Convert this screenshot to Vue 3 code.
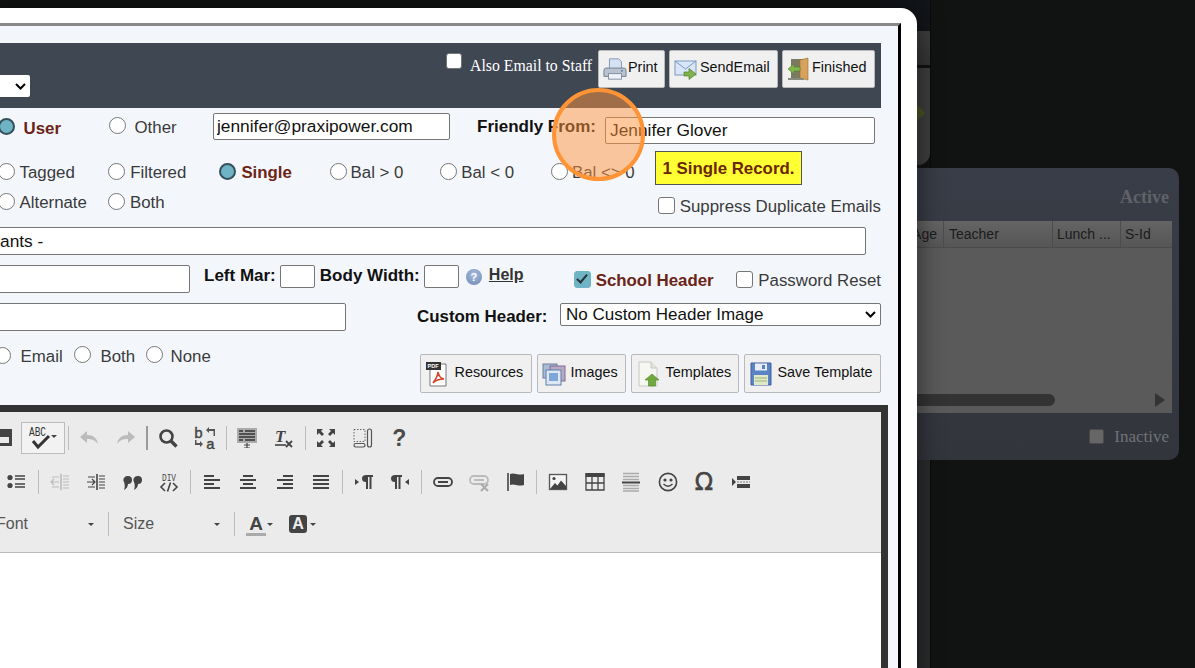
<script setup>
const columns = [
  { label: 'Age', cls: 'col-age' },
  { label: 'Teacher', cls: 'col-teacher' },
  { label: 'Lunch ...', cls: 'col-lunch' },
  { label: 'S-Id', cls: 'col-sid' }
]
</script>

<template>
  <div class="stage">
    <!-- dimmed desktop behind the dialog -->
    <div class="bg-top"></div>
    <div class="bg-bar"></div>
    <div class="bg-pane">
      <svg class="bg-diamond" width="14" height="26" viewBox="0 0 14 26"><path d="M0 0 L13 13 L0 26 Z" fill="#4a5526" /></svg>
    </div>
    <div class="bg-lower"></div>
    <div class="bg-rule"></div>
    <section class="win">
      <div class="win-title">Active</div>
      <div class="win-table">
        <div class="win-head">
          <span v-for="c in columns" :key="c.label" class="win-col" :class="c.cls">{{ c.label }}</span>
        </div>
        <div class="win-scroll">
          <span class="win-thumb"></span>
          <svg width="10" height="14" viewBox="0 0 10 14"><path d="M0 0 L10 7 L0 14 Z" fill="#333" /></svg>
        </div>
      </div>
      <div class="win-foot">
        <span class="win-check"></span>
        <span class="win-inactive">Inactive</span>
      </div>
    </section>

    <!-- dialog -->
    <main class="modal">
      <div class="panel">
        <header class="bar">
          <span class="sel-wrap w-bar">
            <select class="bar-select"><option></option></select>
            <svg class="chev" width="11" height="7" viewBox="0 0 11 7"><path d="M1 1 L5.5 5.5 L10 1" fill="none" stroke="#000" stroke-width="2" /></svg>
          </span>
          <label class="staff"><input type="checkbox" class="cb" /><span>Also Email to Staff</span></label>
          <button class="btn b-print">
            <svg width="24" height="24" viewBox="0 0 26 26">
              <path d="M7 2 H17 L20 5 V13 H7 Z" fill="#d6e2f3" stroke="#7f93b5" />
              <path d="M3 12 H23 Q25 12 25 15 V21 H1 V15 Q1 12 3 12 Z" fill="#b9c2cf" stroke="#6f7d92" />
              <rect x="6" y="18" width="14" height="6" fill="#eef2f8" stroke="#7f8ca3" />
              <circle cx="20.5" cy="15" r="1" fill="#4b6e9d" />
            </svg>
            <span>Print</span>
          </button>
          <button class="btn b-mail">
            <svg width="24" height="24" viewBox="0 0 24 24">
              <rect x="1" y="4" width="21" height="14" fill="#d8e6f7" stroke="#7c97bd" />
              <path d="M1 4 L11.5 12 L22 4" fill="none" stroke="#7c97bd" />
              <path d="M10 15 H15 V11.5 L22 17 L15 22.5 V19 H10 Z" fill="#7fb24a" stroke="#55802c" stroke-width=".7" />
            </svg>
            <span>SendEmail</span>
          </button>
          <button class="btn b-door">
            <svg width="23" height="24" viewBox="0 0 23 24">
              <rect x="4" y="2" width="13" height="20" fill="#7a7a60" />
              <path d="M13 3 L21 1 V23 L13 21 Z" fill="#d8a25c" stroke="#9c6d2f" stroke-width=".6" />
              <path d="M1 12 L7 7 V10 H13 V14 H7 V17 Z" fill="#80b64c" stroke="#55802c" stroke-width=".6" />
              <rect x="1" y="21" width="16" height="2" fill="#8a8a7a" />
            </svg>
            <span>Finished</span>
          </button>
        </header>

        <div class="row r1">
          <label class="opt o-user"><input type="radio" name="a" class="rd" checked /><span class="hot">User</span></label>
          <label class="opt o-other"><input type="radio" name="a" class="rd" /><span>Other</span></label>
          <input class="field f-mail" value="jennifer@praxipower.com" />
          <span class="strong l-friendly">Friendly From:</span>
          <input class="field f-friendly" value="Jennifer Glover" />
        </div>

        <div class="row r2">
          <label class="opt o-col"><input type="radio" name="b" class="rd" /><span>Tagged</span></label>
          <label class="opt o-col"><input type="radio" name="b" class="rd" /><span>Filtered</span></label>
          <label class="opt o-col o-single"><input type="radio" name="b" class="rd" checked /><span class="hot">Single</span></label>
          <label class="opt o-col o-bal"><input type="radio" name="b" class="rd" /><span>Bal &gt; 0</span></label>
          <label class="opt o-col o-bal"><input type="radio" name="b" class="rd" /><span>Bal &lt; 0</span></label>
          <label class="opt o-last"><input type="radio" name="b" class="rd" /><span>Bal &lt;&gt; 0</span></label>
          <div class="notice">1 Single Record.</div>
        </div>

        <div class="row r3">
          <label class="opt o-col"><input type="radio" name="c" class="rd" /><span>Alternate</span></label>
          <label class="opt o-both"><input type="radio" name="c" class="rd" /><span>Both</span></label>
          <label class="opt o-suppress"><input type="checkbox" class="cb" /><span>Suppress Duplicate Emails</span></label>
        </div>

        <div class="row r4">
          <input class="field f-subject" value="ants -" />
        </div>

        <div class="row r5">
          <input class="field f-a" />
          <span class="strong l-left">Left Mar:</span>
          <input class="field f-small" />
          <span class="strong l-body">Body Width:</span>
          <input class="field f-small" />
          <span class="help-ico">?</span>
          <a class="help">Help</a>
          <label class="opt o-school"><input type="checkbox" class="cb" checked /><span class="hot">School Header</span></label>
          <label class="opt o-pass"><input type="checkbox" class="cb" /><span>Password Reset</span></label>
        </div>

        <div class="row r6">
          <input class="field f-b" />
          <span class="strong l-custom">Custom Header:</span>
          <span class="sel-wrap w-sel">
            <select class="sel"><option>No Custom Header Image</option></select>
            <svg class="chev" width="11" height="7" viewBox="0 0 11 7"><path d="M1 1 L5.5 5.5 L10 1" fill="none" stroke="#000" stroke-width="2" /></svg>
          </span>
        </div>

        <div class="row r7">
          <label class="opt o-email"><input type="radio" name="d" class="rd" /><span>Email</span></label>
          <label class="opt o-b2"><input type="radio" name="d" class="rd" /><span>Both</span></label>
          <label class="opt o-none"><input type="radio" name="d" class="rd" /><span>None</span></label>
          <button class="btn b2 b-res">
            <svg width="24" height="26" viewBox="0 0 24 26">
              <path d="M5 3 H21 V25 H5 Z" fill="#fff" stroke="#777" />
              <rect x="1" y="1" width="15" height="8" fill="#333" />
              <text x="2.5" y="7.4" class="pdf-t">PDF</text>
              <path d="M8 22 C11 18 13 15 13 11 C14 15 15 17 19 18 C15 18 11 19 8 22 Z" fill="none" stroke="#d8432c" stroke-width="1.6" />
            </svg>
            <span>Resources</span>
          </button>
          <button class="btn b2 b-img">
            <svg width="24" height="24" viewBox="0 0 24 24">
              <rect x="1" y="2" width="14" height="14" fill="#a9bdd4" stroke="#6d7f99" />
              <rect x="8" y="4" width="15" height="15" fill="#b8a9c4" stroke="#7a6f8d" />
              <rect x="4" y="8" width="15" height="15" fill="#dce8f6" stroke="#5f7ea8" />
              <rect x="7" y="11" width="9" height="8" fill="#7ea6d6" />
            </svg>
            <span>Images</span>
          </button>
          <button class="btn b2 b-tpl">
            <svg width="24" height="26" viewBox="0 0 24 26">
              <path d="M3 1 H15 L21 7 V25 H3 Z" fill="#f7f7f2" stroke="#c8c8c0" />
              <path d="M15 1 V7 H21" fill="#e4e4dc" stroke="#c8c8c0" />
              <path d="M16 13 L23 19 H19.5 V25 H12.5 V19 H9 Z" fill="#6fa93f" stroke="#4f7f28" stroke-width=".6" />
            </svg>
            <span>Templates</span>
          </button>
          <button class="btn b2 b-save">
            <svg width="22" height="24" viewBox="0 0 22 24">
              <path d="M1 1 H21 V23 H1 Z" fill="#5a83c6" stroke="#3f5f9a" />
              <rect x="5" y="1.5" width="12" height="7" fill="#e9eef6" />
              <rect x="12" y="3" width="3" height="4" fill="#5a83c6" />
              <rect x="4" y="13" width="14" height="10" fill="#dfe8c9" />
              <path d="M5 16 H17 M5 19 H17" stroke="#9bb377" />
            </svg>
            <span>Save Template</span>
          </button>
        </div>

        <div class="editor">
          <div class="toolbar">
            <div class="tb tb1">
              <span class="c c-paste">
                <svg width="20" height="20" viewBox="0 0 20 20"><path d="M5 1 H18 V5 H5 Z M2 5 H18 V18 H2 Z" fill="#444" /><rect x="5" y="9" width="10" height="6" fill="#ebebeb" /></svg>
              </span>
              <span class="abc">
                <svg width="30" height="26" viewBox="0 0 30 26">
                  <text x="1" y="11" class="mono-t" textLength="17" lengthAdjust="spacingAndGlyphs">ABC</text>
                  <path d="M5 16 L10 22 L21 11" fill="none" stroke="#333" stroke-width="3" />
                  <path d="M23 10 H29 L26 13 Z" fill="#444" />
                </svg>
              </span>
              <span class="s"></span>
              <span class="c"><svg width="20" height="20" viewBox="0 0 20 20"><path d="M1 9 L8 3 V7 C14 7 18 10 19 16 C16 12 13 11 8 11 V15 Z" fill="#bbb" /></svg></span>
              <span class="c"><svg width="20" height="20" viewBox="0 0 20 20"><path d="M19 9 L12 3 V7 C6 7 2 10 1 16 C4 12 7 11 12 11 V15 Z" fill="#bbb" /></svg></span>
              <span class="s s-dark"></span>
              <span class="c"><svg width="20" height="20" viewBox="0 0 20 20"><circle cx="8.5" cy="8.5" r="6" fill="none" stroke="#444" stroke-width="2.6" /><path d="M13 13 L18.5 18.5" stroke="#444" stroke-width="3.4" /></svg></span>
              <span class="c">
                <svg width="24" height="30" viewBox="0 0 24 30">
                  <text x="1" y="15" class="rep-t">b</text>
                  <text x="13" y="26" class="rep-t">a</text>
                  <path d="M13 7 L16 4 V6 H22 V13 H20.5 V8 H16 V10 Z M2 17 H3.5 V20 H7 V18 L10 21 L7 24 V22 H2 Z" fill="#555" />
                </svg>
              </span>
              <span class="s"></span>
              <span class="c">
                <svg width="20" height="20" viewBox="0 0 20 20">
                  <rect x="0" y="0" width="20" height="15" fill="#aaa" />
                  <path d="M2 3 H6 M8 3 H18 M2 6 H18 M2 9 H18 M2 12 H6 M8 12 H18" stroke="#333" stroke-width="1.6" />
                  <path d="M7 17 H13 M10 15 V20 M7 20 H13" stroke="#444" stroke-width="1.2" />
                </svg>
              </span>
              <span class="c">
                <svg width="20" height="20" viewBox="0 0 20 20">
                  <text x="1" y="14" class="tx-t">T</text>
                  <path d="M1 17 H12" stroke="#444" stroke-width="1.6" />
                  <path d="M12 13 L18 19 M18 13 L12 19" stroke="#444" stroke-width="1.8" />
                </svg>
              </span>
              <span class="s"></span>
              <span class="c">
                <svg width="20" height="20" viewBox="0 0 20 20">
                  <path d="M1 1 H7 L5 3 L8 6 L6 8 L3 5 L1 7 Z M19 1 V7 L17 5 L14 8 L12 6 L15 3 L13 1 Z M1 19 V13 L3 15 L6 12 L8 14 L5 17 L7 19 Z M19 19 H13 L15 17 L12 14 L14 12 L17 15 L19 13 Z" fill="#444" />
                </svg>
              </span>
              <span class="c">
                <svg width="20" height="20" viewBox="0 0 20 20">
                  <rect x="1" y="1.5" width="11" height="12" fill="none" stroke="#666" stroke-dasharray="1.5 1.5" />
                  <rect x="14.5" y="1" width="4" height="18" rx="2" fill="none" stroke="#555" stroke-width="1.2" />
                  <rect x="1" y="15.5" width="11" height="3.5" rx="1.7" fill="none" stroke="#555" stroke-width="1.2" />
                </svg>
              </span>
              <span class="c q">?</span>
            </div>

            <div class="tb tb2">
              <span class="c">
                <svg width="20" height="20" viewBox="0 0 20 20">
                  <circle cx="3" cy="5.5" r="2.6" fill="#444" /><circle cx="3" cy="13.5" r="2.6" fill="#444" />
                  <path d="M8 4 H18 M8 7 H18 M8 12 H18 M8 15 H18" stroke="#444" stroke-width="1.4" />
                </svg>
              </span>
              <span class="s"></span>
              <span class="c">
                <svg width="20" height="20" viewBox="0 0 20 20">
                  <path d="M11 2 V18" stroke="#bbb" stroke-width="1.6" />
                  <path d="M13 4 H19 M13 7 H19 M13 10 H19 M13 13 H19 M13 16 H19 M1 10 H9 M4 7 L1 10 L4 13 M2 5 H9 M2 15 H9" stroke="#bbb" stroke-width="1.2" fill="none" />
                </svg>
              </span>
              <span class="c">
                <svg width="20" height="20" viewBox="0 0 20 20">
                  <path d="M11 2 V18" stroke="#444" stroke-width="1.6" />
                  <path d="M13 4 H19 M13 7 H19 M13 10 H19 M13 13 H19 M13 16 H19 M1 10 H9 M6 7 L9 10 L6 13 M2 5 H9 M2 15 H9" stroke="#444" stroke-width="1.2" fill="none" />
                </svg>
              </span>
              <span class="c">
                <svg width="20" height="20" viewBox="0 0 20 20">
                  <path d="M5 4 A4 4 0 0 1 5 12 C5 15 3 17 1 18 C2 15 2 13 1 10 A4 4 0 0 1 5 4 Z M15 4 A4 4 0 0 1 15 12 C15 15 13 17 11 18 C12 15 12 13 11 10 A4 4 0 0 1 15 4 Z" fill="#444" />
                </svg>
              </span>
              <span class="c">
                <svg width="20" height="22" viewBox="0 0 20 22">
                  <text x="3" y="10" class="div-t" textLength="14" lengthAdjust="spacingAndGlyphs">DIV</text>
                  <path d="M6 12 L2 16 L6 20 M14 12 L18 16 L14 20 M11.5 11.5 L8.5 20.5" fill="none" stroke="#444" stroke-width="1.6" />
                </svg>
              </span>
              <span class="s"></span>
              <span class="c"><svg width="20" height="20" viewBox="0 0 20 20"><path d="M2 4 H12 M2 8 H18 M2 12 H12 M2 16 H18" stroke="#444" stroke-width="2.2" /></svg></span>
              <span class="c"><svg width="20" height="20" viewBox="0 0 20 20"><path d="M5 4 H15 M2 8 H18 M5 12 H15 M2 16 H18" stroke="#444" stroke-width="2.2" /></svg></span>
              <span class="c"><svg width="20" height="20" viewBox="0 0 20 20"><path d="M8 4 H18 M2 8 H18 M8 12 H18 M2 16 H18" stroke="#444" stroke-width="2.2" /></svg></span>
              <span class="c"><svg width="20" height="20" viewBox="0 0 20 20"><path d="M2 4 H18 M2 8 H18 M2 12 H18 M2 16 H18" stroke="#444" stroke-width="2.2" /></svg></span>
              <span class="s"></span>
              <span class="c">
                <svg width="20" height="20" viewBox="0 0 20 20">
                  <path d="M1 7 L5 10 L1 13 Z" fill="#444" />
                  <path d="M12 3 H19 V5 H17.5 V17 H15.5 V5 H14 V17 H12 V10 A4 3.5 0 0 1 12 3 Z" fill="#444" />
                </svg>
              </span>
              <span class="c">
                <svg width="20" height="20" viewBox="0 0 20 20">
                  <path d="M19 7 L15 10 L19 13 Z" fill="#444" />
                  <path d="M5 3 H12 V5 H10.5 V17 H8.5 V5 H7 V17 H5 V10 A4 3.5 0 0 1 5 3 Z" fill="#444" />
                </svg>
              </span>
              <span class="s"></span>
              <span class="c">
                <svg width="20" height="20" viewBox="0 0 20 20">
                  <rect x="1" y="6" width="18" height="8" rx="4" fill="none" stroke="#444" stroke-width="1.8" />
                  <path d="M5 10 H15" stroke="#444" stroke-width="2" />
                </svg>
              </span>
              <span class="c">
                <svg width="20" height="20" viewBox="0 0 20 20">
                  <rect x="1" y="4" width="18" height="8" rx="4" fill="none" stroke="#bbb" stroke-width="1.8" />
                  <path d="M5 8 H15" stroke="#bbb" stroke-width="2" />
                  <path d="M12 12 L19 19 M19 12 L12 19" stroke="#aaa" stroke-width="2" />
                </svg>
              </span>
              <span class="c">
                <svg width="20" height="20" viewBox="0 0 20 20">
                  <path d="M2 1 V19" stroke="#444" stroke-width="1.6" />
                  <path d="M4 2 C8 0 12 4 18 2 V13 C12 15 8 11 4 13 Z" fill="#444" />
                </svg>
              </span>
              <span class="s"></span>
              <span class="c">
                <svg width="20" height="20" viewBox="0 0 20 20">
                  <rect x="1.5" y="2.5" width="17" height="15" fill="#f4f4f4" stroke="#555" stroke-width="1.3" />
                  <circle cx="6" cy="6.5" r="1.6" fill="#444" />
                  <path d="M2 17 L7 11 L9.5 13.5 L13 8.5 L18 14 V17 Z" fill="#444" />
                </svg>
              </span>
              <span class="c">
                <svg width="20" height="20" viewBox="0 0 20 20">
                  <rect x="0.5" y="1" width="19" height="4" fill="#444" />
                  <path d="M1 2 H19 V18 H1 Z M7 5 V18 M13 5 V18 M1 11 H19" fill="none" stroke="#444" stroke-width="1.3" />
                </svg>
              </span>
              <span class="c">
                <svg width="20" height="20" viewBox="0 0 20 20">
                  <path d="M2 1.5 H18 M2 4.5 H18 M2 7.5 H18 M2 13.5 H18 M2 16.5 H18 M2 19 H18" stroke="#aaa" stroke-width="1.4" />
                  <path d="M1 10.5 H19" stroke="#444" stroke-width="2" />
                </svg>
              </span>
              <span class="c">
                <svg width="20" height="20" viewBox="0 0 20 20">
                  <circle cx="10" cy="10" r="8.6" fill="none" stroke="#444" stroke-width="1.6" />
                  <circle cx="7" cy="8" r="1.6" fill="#444" /><circle cx="13" cy="8" r="1.6" fill="#444" />
                  <path d="M5.5 12 Q10 16.5 14.5 12" fill="none" stroke="#444" stroke-width="1.4" />
                </svg>
              </span>
              <span class="c omega">Ω</span>
              <span class="c">
                <svg width="20" height="20" viewBox="0 0 20 20">
                  <path d="M1 6 L5 10 L1 14 Z" fill="#444" />
                  <rect x="6" y="4" width="13" height="4" fill="#444" />
                  <rect x="6" y="12" width="13" height="4" fill="#444" />
                  <path d="M6 10 H19" stroke="#777" stroke-dasharray="2 1" />
                </svg>
              </span>
            </div>

            <div class="tb tb3">
              <span class="combo c-font"><span>Font</span><i class="caret"></i></span>
              <span class="s"></span>
              <span class="combo c-size"><span>Size</span><i class="caret"></i></span>
              <span class="s"></span>
              <span class="txt-a"><b>A</b><i class="caret"></i></span>
              <span class="bg-a"><b>A</b><i class="caret"></i></span>
            </div>
          </div>
          <div class="canvas"></div>
        </div>
      </div>
    </main>

    <div class="spot"></div>
  </div>
</template>

<style>
html, body { margin: 0; background: #111312; }
</style>

<style scoped>
.stage {
  position: relative;
  width: 1195px;
  height: 668px;
  overflow: hidden;
  background: #111312;
  font-family: "Liberation Sans", Arial, sans-serif;
}

/* backdrop */
.bg-top { position: absolute; left: 880px; top: 0; width: 50px; height: 30px; background: #12151a; }
.bg-bar { position: absolute; left: 880px; top: 31px; width: 50px; height: 34px; background: linear-gradient(#3f3f3f, #343434); }
.bg-pane {
  position: absolute; left: 880px; top: 68px; width: 50px; height: 97px;
  background: #3e3e3e; border-bottom-right-radius: 12px;
}
.bg-diamond { position: absolute; left: 32px; top: 32px; }
.bg-lower { position: absolute; left: 880px; top: 460px; width: 50px; height: 208px; background: #2a2b2c; }
.bg-rule { position: absolute; left: 930px; top: 0; width: 1px; height: 668px; background: #0b0b0b; }
.win {
  position: absolute; left: 800px; top: 168px; width: 379px; height: 292px;
  box-sizing: border-box; border-radius: 10px;
  background: linear-gradient(#393d47, #32353c);
  display: flex; flex-direction: column; align-items: flex-end;
}
.win-title {
  height: 53px; padding-right: 10px;
  font: bold 18px/58px "Liberation Serif", serif; color: #5f6269;
}
.win-table {
  width: 372px; height: 192px; margin-right: 7px; box-sizing: border-box;
  background: #5a5a5a; display: flex; flex-direction: column; justify-content: space-between;
}
.win-head {
  height: 27px; display: flex; justify-content: flex-end; padding-right: 1px;
  background: linear-gradient(#646464, #565656); border-bottom: 1px solid #4b4b4b; box-sizing: border-box;
}
.win-col {
  font-size: 14px; line-height: 26px; color: #1c1c1c; box-sizing: border-box;
  border-right: 1px solid #4c4c4c; white-space: nowrap;
}
.col-age { width: 40px; text-align: right; padding-right: 6px; }
.col-teacher { width: 109px; padding-left: 5px; }
.col-lunch { width: 68px; padding-left: 4px; }
.col-sid { width: 50px; padding-left: 4px; border-right: 0; }
.win-scroll {
  height: 17px; display: flex; align-items: center; justify-content: space-between;
  padding-right: 7px; margin-bottom: 5px;
}
.win-thumb { width: 255px; height: 12px; border-radius: 6px; background: #333; }
.win-foot { flex: 1; display: flex; align-items: center; padding-right: 10px; gap: 10px; }
.win-check {
  width: 15px; height: 15px; box-sizing: border-box; border-radius: 2px;
  background: #666; border: 1px solid #4a4a4a;
}
.win-inactive { font: 17px "Liberation Serif", serif; color: #6f7276; }

/* dialog */
.modal {
  position: absolute; left: -10px; top: 8px; width: 927px; height: 680px;
  box-sizing: border-box; padding: 15px 16px 0 0;
  background: #fff; border-radius: 0 16px 0 0;
  box-shadow: 0 0 26px rgba(0, 0, 0, .55);
}
.panel {
  height: 100%; box-sizing: border-box; padding: 17px 17px 0 0;
  background: #f3f7fc; border-top: 3px solid #888; border-right: 3px solid #000;
}
.bar {
  height: 65px; background: #3f4753; display: flex; align-items: flex-start;
  position: relative;
}
.sel-wrap { position: relative; display: block; flex: none; }
.chev { position: absolute; pointer-events: none; }
.w-bar { width: 40px; height: 22px; margin-top: 32px; }
.w-bar .chev { left: 25px; top: 8px; }
.bar-select {
  appearance: none; -webkit-appearance: none; display: block;
  width: 40px; height: 22px; border: 0; border-radius: 2px; background: #fff;
  font: 15px "Liberation Sans", sans-serif; color: #000;
}
.staff {
  display: flex; align-items: flex-start; gap: 8px; margin: 10px 0 0 416px; width: 152px;
  font: 15.8px/24px "Liberation Serif", serif; color: #fff; white-space: nowrap;
}
.staff span { position: relative; top: 1px; }
.staff .cb { margin-top: 0; width: 16px; height: 16px; }
.btn {
  display: flex; align-items: center; box-sizing: border-box; height: 38px; padding: 0 0 0 4px;
  background: #f0f0f0; border: 1px solid #b9b9b9; border-radius: 2px;
  font: 14.4px "Liberation Sans", sans-serif; color: #111; white-space: nowrap;
}
.btn svg { flex: none; }
.btn span { position: relative; top: -2px; }
.b-print { width: 67px; margin: 7px 0 0 0; gap: 1px; }
.b-mail { width: 109px; margin: 7px 0 0 4px; gap: 2px; }
.b-door { width: 93px; margin: 7px 0 0 4px; gap: 2px; }

.row { display: flex; align-items: flex-start; position: relative; }
.r1 { height: 43px; padding-left: 7.5px; }
.r2 { height: 36px; padding-left: 7.5px; }
.r3 { height: 38px; padding-left: 7.5px; }
.r4 { height: 36px; }
.r5 { height: 38px; }
.r6 { height: 45px; }
.r7 { height: 61px; padding-left: 7.5px; }

.opt {
  display: flex; align-items: center; font-size: 16.85px; color: #3a3a3a; white-space: nowrap; box-sizing: border-box;
}
.opt span { position: relative; top: 2px; }
.hot { font-weight: 700; color: #6c2416; }
.strong { font-weight: 700; font-size: 17px; color: #111; white-space: nowrap; }

.rd, .cb {
  appearance: none; -webkit-appearance: none; margin: 0; flex: none; box-sizing: border-box;
  width: 17px; height: 17px; background: #fff; border: 1.5px solid #767676; position: relative;
}
.rd { border-radius: 50%; }
.rd:checked { background: #6fb4c4; border: 2.5px solid #33505c; }
.cb { border-radius: 3px; }
.cb:checked { background: #6fb4c4; border-color: #6fb4c4; }
.cb:checked::after {
  content: ""; position: absolute; left: 4.5px; top: 0.5px; width: 4px; height: 9px;
  border: solid #26323a; border-width: 0 2.4px 2.4px 0; transform: rotate(40deg);
}

.field {
  box-sizing: border-box; height: 28px; border: 1px solid #767676; border-radius: 2px; background: #fff;
  padding: 0 3px; font: 17.33px "Liberation Sans", sans-serif; color: #111; outline: 0; display: block;
}

.o-user { width: 111.5px; margin-top: 8.5px; gap: 9px; }
.o-other { width: 104px; margin-top: 7.5px; gap: 8.5px; }
.f-mail { width: 237px; height: 27px; margin-top: 5px; }
.l-friendly { margin: 9px 0 0 27px; width: 128px; }
.f-friendly { width: 270px; height: 27px; margin-top: 9px; padding-left: 4px; }

.o-col { width: 110.7px; margin-top: 10px; gap: 5px; }
.o-single { gap: 5.5px; }
.o-bal { gap: 4px; }
.o-last { width: 104px; margin-top: 10px; gap: 4px; }
.notice {
  box-sizing: border-box; width: 147px; height: 34px; line-height: 33px; text-align: center;
  background: #ffff33; border: 1px solid #555; font-weight: 700; font-size: 16.85px; color: #6b2500;
}

.r3 .o-col { margin-top: 4px; }
.o-both { width: 551px; margin-top: 4px; gap: 5px; }
.o-suppress { margin-top: 8px; gap: 5px; }

.f-subject { width: 876px; margin-top: 2px; padding-left: 9px; }

.f-a { width: 200px; margin-top: 4px; }
.l-left { margin: 5px 0 0 14px; width: 76px; }
.f-small { width: 35px; height: 23px; margin-top: 4px; }
.l-body { margin: 5px 0 0 5px; width: 104px; flex: none; }
.help-ico {
  width: 16px; height: 16px; margin: 8px 0 0 7px; border-radius: 50%; flex: none;
  background: radial-gradient(circle at 50% 35%, #a8bcdd, #6e87b2);
  font: bold 11px/16px "Liberation Sans", sans-serif; color: #fff; text-align: center;
}
.help {
  margin: 5px 0 0 7px; width: 85px; font-weight: 700; font-size: 16px; color: #333; text-decoration: underline;
}
.o-school { width: 163px; margin-top: 8px; gap: 5px; }
.o-pass { margin-top: 8px; gap: 5px; }

.f-b { width: 356px; margin-top: 4px; }
.l-custom { margin: 8px 0 0 71px; width: 143px; font-size: 16.9px; }
.w-sel { width: 321px; height: 23px; margin-top: 4px; }
.w-sel .chev { right: 5px; top: 8px; }
.sel {
  appearance: none; -webkit-appearance: none; display: block;
  box-sizing: border-box; width: 321px; height: 23px; padding: 0 5px;
  background: #fff; border: 1px solid #767676; border-radius: 2px;
  font: 17px "Liberation Sans", sans-serif; color: #111;
}

.o-email { width: 80px; margin-top: 1px; gap: 10px; margin-left: -4px; }
.o-b2 { width: 72px; margin-top: 0; gap: 10px; }
.o-b2 span { top: 3px; }
.o-none { width: 266px; margin-top: 0; gap: 8px; }
.o-none span { top: 3px; }
.b2 { height: 39px; margin-top: 10px; }
.b-res { width: 112px; gap: 6px; margin-left: 8px; }
.b-img { width: 89px; margin-left: 5px; gap: 5px; }
.b-tpl { width: 108px; margin-left: 5px; gap: 6px; }
.b-save { width: 137px; margin-left: 5px; gap: 6px; padding-left: 5px; }

/* editor */
.editor {
  width: 898px; height: 263px; box-sizing: border-box; padding: 7px 7px 0 0;
  background: #333;
}
.toolbar {
  height: 141px; box-sizing: border-box; padding-top: 4px;
  background: #ebebeb; border-bottom: 1px solid #bbb;
}
.canvas { height: 120px; background: #fff; }
.tb { display: flex; align-items: center; height: 44px; color: #444; }
.tb1 { margin-left: -3px; }
.tb2 { margin-left: 8.75px; }
.tb3 { height: 40px; }
.c {
  flex: none; width: 36.5px; height: 100%; display: flex; align-items: center; justify-content: center;
}
.c-paste { width: 34px; }
.abc {
  flex: none; width: 44px; height: 32px; box-sizing: border-box; margin-top: -1px;
  display: flex; align-items: center; justify-content: center;
  background: #f2f2f2; border: 1px solid #bcbcbc;
}
.s { flex: none; width: 6px; height: 100%; display: flex; align-items: center; justify-content: center; }
.s::before { content: ""; width: 1px; height: 24px; background: #bcbcbc; }
.s-dark::before { width: 2px; background: #9a9a9a; }
.q { font: bold 23px "Liberation Sans", sans-serif; color: #4a4a4a; }
.omega { font: 24px "DejaVu Sans", sans-serif; -webkit-text-stroke: .5px #444; color: #444; }

.mono-t { font: 12px "Liberation Mono", monospace; fill: #333; }
.rep-t { font: 15px "Liberation Mono", monospace; fill: #444; stroke: #444; stroke-width: .4; }
.tx-t { font: italic bold 17px "Liberation Serif", serif; fill: #444; }
.div-t { font: 10px "Liberation Mono", monospace; fill: #444; }
.pdf-t { font: bold 5.5px "Liberation Sans", sans-serif; fill: #fff; }

.combo {
  flex: none; display: flex; align-items: center; justify-content: space-between; box-sizing: border-box;
  font-size: 16px; color: #555; height: 100%;
}
.c-font { width: 115px; padding: 0 11px 0 6px; }
.c-size { width: 120px; padding: 0 11px 0 12px; }
.caret {
  display: block; width: 0; height: 0; flex: none;
  border-left: 3px solid transparent; border-right: 3px solid transparent; border-top: 3px solid #444;
}
.txt-a {
  flex: none; margin-left: 9px; display: flex; align-items: center; gap: 1px;
}
.txt-a b {
  font: bold 19px/19px "Liberation Sans", sans-serif; color: #444; border-bottom: 3px solid #aaa; width: 20px; text-align: center; margin-top: 2px;
}
.bg-a { flex: none; margin-left: 16px; display: flex; align-items: center; gap: 3px; }
.bg-a b {
  font: bold 16px/18px "Liberation Sans", sans-serif; color: #eee; background: #444; border-radius: 3px;
  width: 18px; height: 18px; text-align: center;
}

.spot {
  position: absolute; left: 552px; top: 88px; width: 93px; height: 93px; box-sizing: border-box;
  border: 4px solid #ff9436; border-radius: 50%; background: rgba(255, 148, 60, .5);
}
</style>
